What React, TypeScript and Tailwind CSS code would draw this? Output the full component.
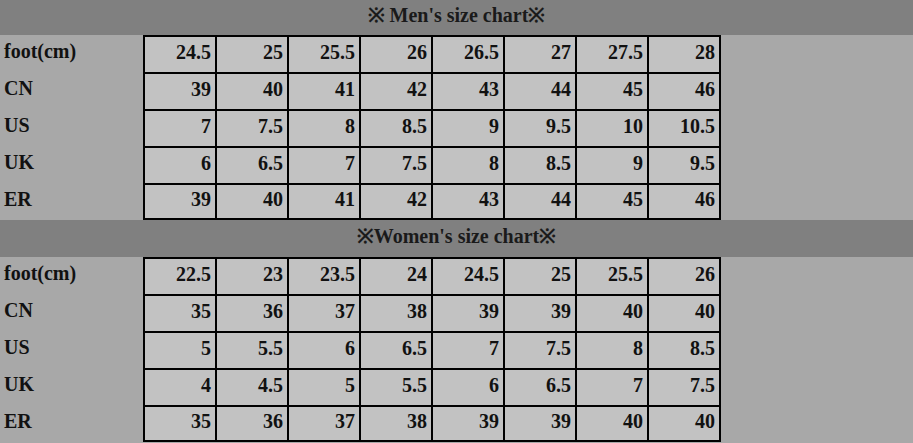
const MEN = [
  { label: "foot(cm)", values: ["24.5", "25", "25.5", "26", "26.5", "27", "27.5", "28"] },
  { label: "CN", values: ["39", "40", "41", "42", "43", "44", "45", "46"] },
  { label: "US", values: ["7", "7.5", "8", "8.5", "9", "9.5", "10", "10.5"] },
  { label: "UK", values: ["6", "6.5", "7", "7.5", "8", "8.5", "9", "9.5"] },
  { label: "ER", values: ["39", "40", "41", "42", "43", "44", "45", "46"] },
];

const WOMEN = [
  { label: "foot(cm)", values: ["22.5", "23", "23.5", "24", "24.5", "25", "25.5", "26"] },
  { label: "CN", values: ["35", "36", "37", "38", "39", "39", "40", "40"] },
  { label: "US", values: ["5", "5.5", "6", "6.5", "7", "7.5", "8", "8.5"] },
  { label: "UK", values: ["4", "4.5", "5", "5.5", "6", "6.5", "7", "7.5"] },
  { label: "ER", values: ["35", "36", "37", "38", "39", "39", "40", "40"] },
];

function Tabla({ titulo, filas, alto }: { titulo: string; filas: typeof MEN; alto: string }) {
  return (
    <div>
      <div className={`${alto} bg-[#808080] flex items-center justify-center pb-[6px] text-[20px] font-bold text-[#1a1a1a]`}>
        {titulo}
      </div>
      {filas.map((f, i) => (
        <div key={f.label} className="flex h-[37px]">
          <div className="w-[143px] pl-[4px] pb-[5px] flex items-center text-[#111]">{f.label}</div>
          {f.values.map((v, j) => (
            <div
              key={j}
              className={`w-[72px] ${j === 7 ? "w-[74px] border-r-2" : ""} ${i === filas.length - 1 ? "border-b-2" : ""} border-l-2 border-t-2 border-black bg-[#c2c2c2] flex items-center justify-end pr-[4px] pb-[5px] text-[#111]`}
            >
              {v}
            </div>
          ))}
        </div>
      ))}
    </div>
  );
}

export default function App() {
  return (
    <div className="w-[913px] h-[443px] overflow-hidden bg-[#a8a8a8] text-[20px] font-bold leading-none" style={{ fontFamily: '"Liberation Serif", serif' }}>
      <Tabla titulo="※ Men's size chart※" filas={MEN} alto="h-[35px]" />
      <Tabla titulo="※Women's size chart※" filas={WOMEN} alto="h-[37px]" />
    </div>
  );
}
